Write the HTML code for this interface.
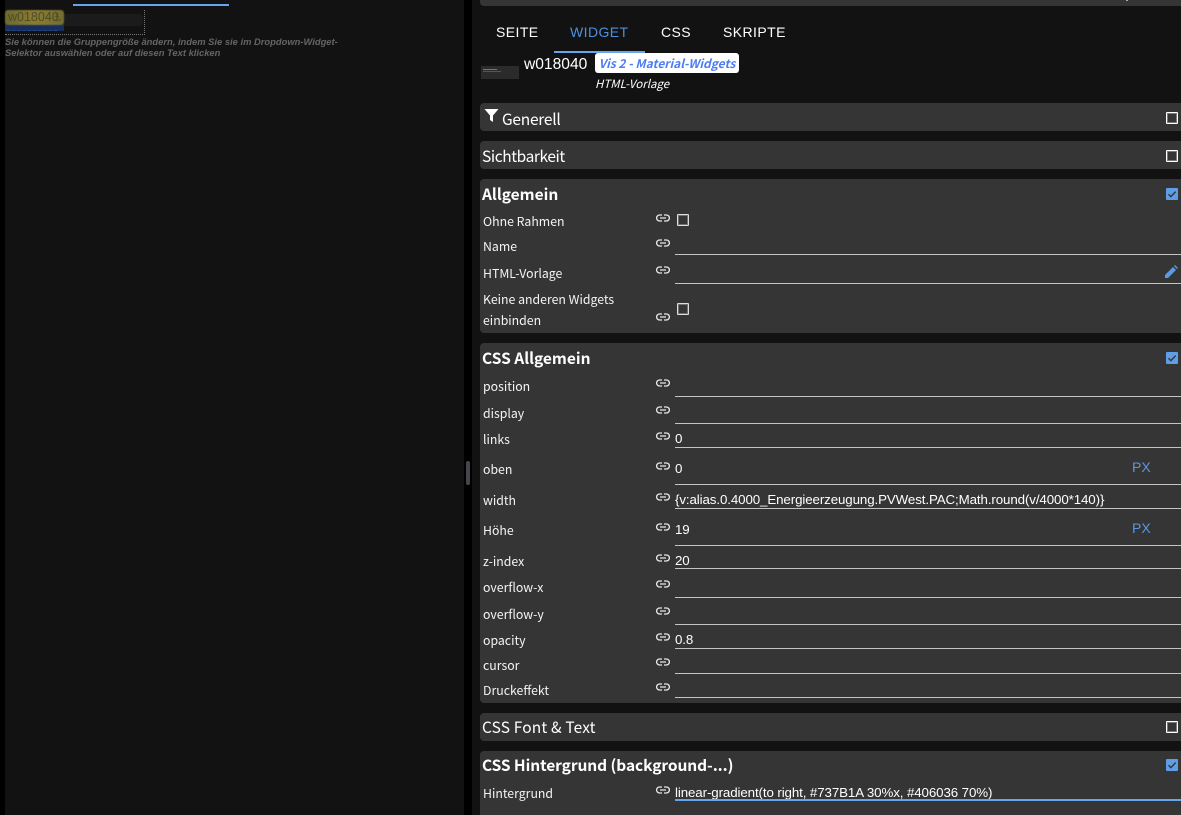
<!DOCTYPE html>
<html><head><meta charset="utf-8">
<style>
html,body{margin:0;padding:0;width:1181px;height:815px;overflow:hidden;background:#121212}
*{box-sizing:border-box}
div,svg{position:absolute}
.p{left:480px;width:701px;background:#353535;border-radius:4px 0 0 4px}
.t{left:482px;font:15.5px/20px "Noto Sans CJK JP","Liberation Sans",sans-serif;color:#fff;white-space:nowrap}
.b{font-weight:700;letter-spacing:0}
.l{left:483px;font:12.3px/18px "Noto Sans CJK JP","Liberation Sans",sans-serif;color:#f4f4f4;white-space:nowrap}
.u{left:675px;width:506px;height:1px;background:#c4c4c4}
.v{left:675px;margin-top:1px;font:13.33px/18px "Liberation Sans",sans-serif;color:#fff;white-space:nowrap;letter-spacing:-.11px}
.px{left:1132px;font:14px/18px "Liberation Sans",sans-serif;color:#5a97e0}
.c{left:677px;width:12px;height:12px;border:1px solid #ddd;box-shadow:inset 0 0 0 1px rgba(255,255,255,.3);border-radius:1px}
.k{left:1166px;width:12px;height:12px;border:1px solid #fff;box-shadow:inset 0 0 0 1px rgba(255,255,255,.35);border-radius:1px}
.kc{left:1166px;width:12px;height:12px;background:#5e9ee6;border-radius:1px}
.tab{top:23px;font:14px/18px "Liberation Sans",sans-serif;color:#fff;letter-spacing:.42px;white-space:nowrap}
</style></head><body>
<svg width="0" height="0" style="position:absolute"><defs>
<symbol id="lk" viewBox="0 0 14 8"><path d="M6 1H3.6a3 3 0 0 0 0 6H6M8 1h2.4a3 3 0 0 1 0 6H8M4 4h6" fill="none" stroke="#e8e8e8" stroke-width="1.3"/></symbol>
<symbol id="ck" viewBox="0 0 12 12"><path d="M2.5 6.2l2.4 2.4 4.8-5" fill="none" stroke="#353535" stroke-width="1.4"/></symbol>
</defs></svg>

<!-- left -->
<div style="left:0;top:0;width:5px;height:815px;background:#000"></div>
<div style="left:73px;top:4px;width:156px;height:2px;background:#64a5ee"></div>
<div style="left:5px;top:10px;width:140px;height:25px;border-right:1px dotted #777;border-bottom:1px dotted #777"></div>
<div style="left:5px;top:14px;width:138px;height:12px;background:#1b1b1b;border-radius:4px"></div>
<div style="left:5px;top:24px;width:59px;height:7px;background:#182f5e"></div>
<div style="left:7px;top:30px;width:50px;height:0;border-top:1px dashed #24488c"></div>
<div style="left:5px;top:10px;width:59px;height:15px;background:linear-gradient(to right,#6c6a2c 0%,#8a7d32 50%,#756c30 100%);border-radius:3px;filter:blur(.6px)"></div>
<div style="left:8px;top:10px;font:12.5px/14px 'Liberation Sans',sans-serif;color:#4e4c28;white-space:nowrap">w018040</div>
<div style="left:52px;top:11px;font:11px/13px 'DejaVu Sans',sans-serif;color:#4e4c28">⚓</div>
<div style="left:5px;top:37px;width:345px;font:italic 700 9.4px/10.6px 'Liberation Sans',sans-serif;color:#656565;white-space:nowrap">Sie können die Gruppengröße ändern, indem Sie sie im Dropdown-Widget-<br>Selektor auswählen oder auf diesen Text klicken</div>

<!-- divider -->
<div style="left:464px;top:0;width:8px;height:815px;background:#000"></div>
<div style="left:466px;top:461px;width:4px;height:24px;background:#45454f;border-radius:2px"></div>

<!-- top bar -->
<div class="p" style="top:0;height:6px;border-radius:0 0 0 4px"></div>
<div style="left:1126px;top:0;width:2px;height:1px;background:#aaa"></div>

<!-- tabs -->
<div class="tab" style="left:496px">SEITE</div>
<div class="tab" style="left:570px;color:#4f8fdd">WIDGET</div>
<div class="tab" style="left:661px">CSS</div>
<div class="tab" style="left:723px">SKRIPTE</div>
<div style="left:554px;top:51px;width:91px;height:2px;background:#64a5ee"></div>

<!-- header -->
<div style="left:481px;top:66px;width:38px;height:13px;background:#2b2b2b"></div>
<div style="left:483px;top:69px;width:14px;height:1px;background:#777"></div>
<div style="left:483px;top:71px;width:18px;height:1px;background:#555"></div>
<div style="left:524px;top:55px;font:15.6px/20px 'Liberation Sans',sans-serif;color:#fff;white-space:nowrap">w018040</div>
<div style="left:595px;top:53px;width:144px;height:20px;background:#fff;border-radius:3px;font:italic 700 12px/22px 'Noto Sans CJK JP','Liberation Sans',sans-serif;color:#4d7df0;text-align:center;white-space:nowrap">Vis 2 - Material-Widgets</div>
<div style="left:595px;top:75px;font:italic 11.5px/18px 'Noto Sans CJK JP','Liberation Sans',sans-serif;color:#fff;white-space:nowrap">HTML-Vorlage</div>

<!-- Generell -->
<div class="p" style="top:103px;height:28px"></div>
<svg style="left:484px;top:108px" width="15" height="15" viewBox="0 0 15 15"><path d="M.5 1h14L9 7.5V14L6 12V7.5z" fill="#fff"/></svg>
<div class="t" style="left:502px;top:109px;letter-spacing:-.25px">Generell</div>
<div class="k" style="top:112px"></div>

<!-- Sichtbarkeit -->
<div class="p" style="top:141px;height:28px"></div>
<div class="t" style="top:146px;letter-spacing:-.4px">Sichtbarkeit</div>
<div class="k" style="top:150px"></div>

<!-- Allgemein -->
<div class="p" style="top:179px;height:154px"></div>
<div class="t b" style="top:184px">Allgemein</div>
<div class="kc" style="top:188px"></div><svg style="left:1166px;top:188px" width="12" height="12"><use href="#ck"/></svg>
<div class="l" style="top:212px">Ohne Rahmen</div>
<svg style="left:656px;top:214px" width="14" height="8"><use href="#lk"/></svg>
<div class="c" style="top:214px"></div>
<div class="l" style="top:237px">Name</div>
<svg style="left:656px;top:239px" width="14" height="8"><use href="#lk"/></svg>
<div class="u" style="top:254px"></div>
<div class="l" style="top:264px">HTML-Vorlage</div>
<svg style="left:656px;top:266px" width="14" height="8"><use href="#lk"/></svg>
<div class="u" style="top:283px"></div>
<svg style="left:1165px;top:265px" width="13" height="13" viewBox="0 0 13 13"><path d="M0 13V10L8 2l3 3-8 8zM9 1l1-1 3 3-1 1z" fill="#5a9be6"/></svg>
<div class="l" style="top:290px">Keine anderen Widgets</div>
<div class="l" style="top:311px">einbinden</div>
<svg style="left:656px;top:313px" width="14" height="8"><use href="#lk"/></svg>
<div class="c" style="top:303px"></div>

<!-- CSS Allgemein -->
<div class="p" style="top:343px;height:360px"></div>
<div class="t b" style="top:348px">CSS Allgemein</div>
<div class="kc" style="top:352px"></div><svg style="left:1166px;top:352px" width="12" height="12"><use href="#ck"/></svg>

<div class="l" style="top:377px">position</div>
<svg style="left:656px;top:379px" width="14" height="8"><use href="#lk"/></svg>
<div class="u" style="top:396px"></div>

<div class="l" style="top:404px">display</div>
<svg style="left:656px;top:406px" width="14" height="8"><use href="#lk"/></svg>
<div class="u" style="top:423px"></div>

<div class="l" style="top:430px">links</div>
<svg style="left:656px;top:432px" width="14" height="8"><use href="#lk"/></svg>
<div class="v" style="top:429px">0</div>
<div class="u" style="top:447px"></div>

<div class="l" style="top:460px">oben</div>
<svg style="left:656px;top:462px" width="14" height="8"><use href="#lk"/></svg>
<div class="v" style="top:459px">0</div>
<div class="px" style="top:458px">PX</div>
<div class="u" style="top:484px"></div>

<div class="l" style="top:491px">width</div>
<svg style="left:656px;top:493px" width="14" height="8"><use href="#lk"/></svg>
<div class="v" style="top:490px">{v:alias.0.4000_Energieerzeugung.PVWest.PAC;Math.round(v/4000*140)}</div>
<div class="u" style="top:508px"></div>

<div class="l" style="top:521px">Höhe</div>
<svg style="left:656px;top:523px" width="14" height="8"><use href="#lk"/></svg>
<div class="v" style="top:520px">19</div>
<div class="px" style="top:519px">PX</div>
<div class="u" style="top:545px"></div>

<div class="l" style="top:552px">z-index</div>
<svg style="left:656px;top:554px" width="14" height="8"><use href="#lk"/></svg>
<div class="v" style="top:551px">20</div>
<div class="u" style="top:568px"></div>

<div class="l" style="top:578px">overflow-x</div>
<svg style="left:656px;top:580px" width="14" height="8"><use href="#lk"/></svg>
<div class="u" style="top:597px"></div>

<div class="l" style="top:605px">overflow-y</div>
<svg style="left:656px;top:607px" width="14" height="8"><use href="#lk"/></svg>
<div class="u" style="top:624px"></div>

<div class="l" style="top:631px">opacity</div>
<svg style="left:656px;top:633px" width="14" height="8"><use href="#lk"/></svg>
<div class="v" style="top:630px">0.8</div>
<div class="u" style="top:648px"></div>

<div class="l" style="top:656px">cursor</div>
<svg style="left:656px;top:658px" width="14" height="8"><use href="#lk"/></svg>
<div class="u" style="top:673px"></div>

<div class="l" style="top:681px">Druckeffekt</div>
<svg style="left:656px;top:683px" width="14" height="8"><use href="#lk"/></svg>
<div class="u" style="top:697px"></div>

<!-- Font -->
<div class="p" style="top:713px;height:28px"></div>
<div class="t" style="top:717px;letter-spacing:.15px">CSS Font &amp; Text</div>
<div class="k" style="top:721px"></div>

<!-- Hintergrund -->
<div class="p" style="top:751px;height:64px;border-radius:4px 0 0 0"></div>
<div class="t b" style="top:755px;letter-spacing:-.08px">CSS Hintergrund (background-...)</div>
<div class="kc" style="top:759px"></div><svg style="left:1166px;top:759px" width="12" height="12"><use href="#ck"/></svg>
<div class="l" style="top:784px">Hintergrund</div>
<svg style="left:656px;top:786px" width="14" height="8"><use href="#lk"/></svg>
<div class="v" style="top:783px">linear-gradient(to right, #737B1A 30%x, #406036 70%)</div>
<div class="u" style="top:799px;height:2px;background:#64a5ee"></div>
</body></html>
